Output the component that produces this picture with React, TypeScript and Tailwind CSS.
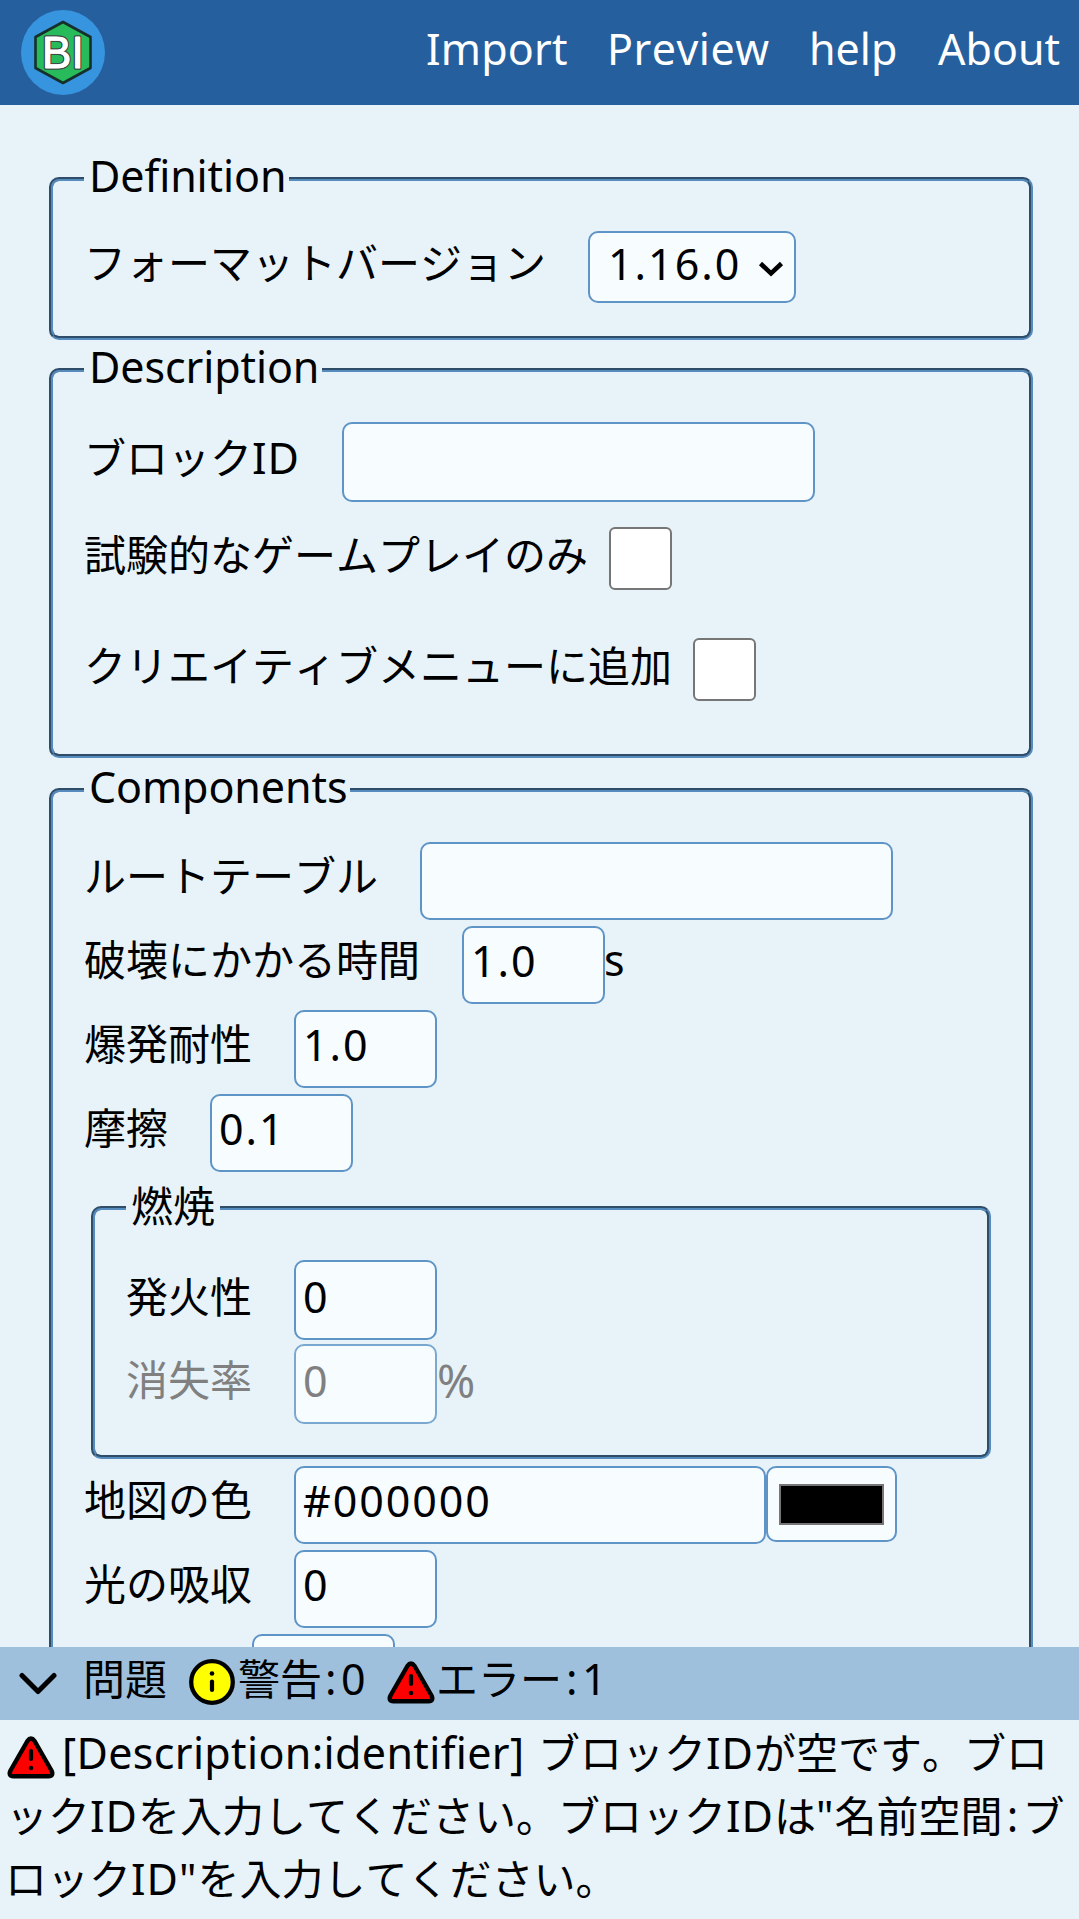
import type { ReactNode } from "react";

const inputBox =
  "shrink-0 rounded-[10px] border-2 border-[#5f94c6] bg-[#f7fcff] pl-[7px] pb-[10px] text-[43px] tracking-[1.900px] text-black outline-none";

function Latin({ children }: { children: ReactNode }) {
  return <span className="text-[43px] tracking-[1px]">{children}</span>;
}

function Legend({ children }: { children: ReactNode }) {
  return (
    <legend className="pt-[1px] pr-[3px] pb-[8px] pl-[5px] text-[43px] leading-[51px] tracking-[-0.100px]">
      {children}
    </legend>
  );
}

function Label({ children }: { children: ReactNode }) {
  return <label className="mr-[42px] leading-[67px] whitespace-nowrap">{children}</label>;
}

function NumberRow({ label, value, unit }: { label: string; value: string; unit?: string }) {
  return (
    <div className="flex h-[84px] items-start">
      <Label>{label}</Label>
      <input className={`${inputBox} h-[78px] w-[143px]`} defaultValue={value} />
      {unit && <span className="-ml-[1px] text-[43px] leading-[67px]">{unit}</span>}
    </div>
  );
}

function Checkbox() {
  return (
    <span className="ml-[21px] size-[63px] shrink-0 rounded-[6px] border-2 border-[#767676] bg-white" />
  );
}

function CheckRow({ label }: { label: string }) {
  return (
    <div className="flex h-[111px] items-start">
      <label className="leading-[56px] whitespace-nowrap">{label}</label>
      <Checkbox />
    </div>
  );
}

function Logo() {
  return (
    <svg className="h-[85px] w-[84px]" viewBox="0 0 84 85">
      <ellipse cx="42" cy="42.5" rx="42" ry="42.5" fill="#3794de" />
      <path
        d="M42 12 L69.5 27 V58 L42 73 L14.500 58 V27 Z"
        fill="#28bb5b"
        stroke="#16302c"
        strokeWidth="2.600"
        strokeLinejoin="round"
      />
      <g
        className="[font-family:'Liberation_Sans',sans-serif] text-[44px]"
        fill="#fff"
        stroke="#3c4a48"
        strokeWidth="3.400"
        strokeLinejoin="round"
        paintOrder="stroke"
      >
        <text x="21" y="58">B</text>
        <text x="50.500" y="58">I</text>
      </g>
      <g
        className="[font-family:'Liberation_Sans',sans-serif] text-[44px]"
        fill="#fff"
        stroke="#fff"
        strokeWidth="0.900"
        strokeLinejoin="round"
      >
        <text x="21" y="58">B</text>
        <text x="50.500" y="58">I</text>
      </g>
    </svg>
  );
}

function ErrorIcon() {
  return (
    <svg className="h-[43px] w-[48px] shrink-0" viewBox="0 0 48 43">
      <path
        d="M20.400 5 Q24 0 27.600 5 L44.500 34.500 Q47 40 41.500 40.300 H6.500 Q1 40 3.500 34.500 Z"
        fill="#f00"
        stroke="#000"
        strokeWidth="4.400"
        strokeLinejoin="round"
      />
      <path d="M24 15 V23" stroke="#000" strokeWidth="4.200" strokeLinecap="round" />
      <circle cx="24" cy="32" r="2.300" />
    </svg>
  );
}

function InfoIcon() {
  return (
    <svg className="h-[46px] w-[46px] shrink-0" viewBox="0 0 46 46">
      <circle cx="23" cy="23" r="20.800" fill="#ff0" stroke="#000" strokeWidth="4.300" />
      <path d="M23 22.500 V31" stroke="#000" strokeWidth="4.200" strokeLinecap="round" />
      <circle cx="23" cy="14.500" r="2.300" />
    </svg>
  );
}

const fieldset =
  "min-w-0 rounded-[10px] border-4 border-[#568bbd] [border-style:groove] px-[31px]";

export default function App() {
  return (
    <div
      lang="ja"
      className="flex h-[1919px] w-[1079px] flex-col overflow-hidden bg-[#e7f3f9] text-[42px] text-black [font-kerning:none] [font-family:'Noto_Sans','Noto_Sans_CJK_JP',sans-serif]"
    >
      <header className="flex h-[105px] shrink-0 items-center justify-between bg-[#265f9e] pr-5 pl-[21px]">
        <Logo />
        <nav className="flex gap-[42px] pb-[7px] text-[43px] leading-[60px] whitespace-nowrap text-white">
          <a className="w-[139px] tracking-[0.200px]">Import</a>
          <a className="w-[160px] tracking-[0.500px]">Preview</a>
          <a className="w-[87px]">help</a>
          <a className="w-[121px]">About</a>
        </nav>
      </header>

      <main className="min-h-0 flex-1 overflow-hidden pt-11 pr-[46px] pl-[49px]">
        <fieldset className={`${fieldset} h-[191px]`}>
          <Legend>Definition</Legend>
          <div className="flex items-start pt-[22px]">
            <label className="mr-[42px] w-[462px] leading-[63px] whitespace-nowrap">
              フォーマットバージョン
            </label>
            <div className="flex h-[72px] w-[208px] shrink-0 items-start justify-between rounded-[10px] border-2 border-[#5f94c6] bg-[#f7fcff] pr-[10px] pl-[18px]">
              <span className="text-[43px] leading-[61px] tracking-[2px]">1.16.0</span>
              <svg className="mt-[27px] h-[18px] w-[26px]" viewBox="0 0 26 18">
                <path d="M2.500 3.500 L13 13.500 L23.500 3.500" fill="none" stroke="#000" strokeWidth="4.500" />
              </svg>
            </div>
          </div>
        </fieldset>

        <fieldset className={`${fieldset} h-[418px]`}>
          <Legend>Description</Legend>
          <div className="flex h-[127px] items-start pt-[22px]">
            <label className="mr-[42px] w-[216px] leading-[72px] whitespace-nowrap">
              ブロック<Latin>ID</Latin>
            </label>
            <input className={`${inputBox} h-[80px] w-[473px]`} />
          </div>
          <CheckRow label="試験的なゲームプレイのみ" />
          <CheckRow label="クリエイティブメニューに追加" />
        </fieldset>

        <fieldset className={`${fieldset} mt-[2px] h-[1100px]`}>
          <Legend>Components</Legend>
          <div className="flex h-[106px] items-start pt-[22px]">
            <Label>ルートテーブル</Label>
            <input className={`${inputBox} h-[78px] w-[473px]`} />
          </div>
          <NumberRow label="破壊にかかる時間" value="1.0" unit="s" />
          <NumberRow label="爆発耐性" value="1.0" />
          <NumberRow label="摩擦" value="0.1" />

          <fieldset className={`${fieldset} mx-[7px] h-[281px]`}>
            <legend className="px-[5px] pt-[2px] pb-[6px] leading-[52px]">燃焼</legend>
            <div className="flex h-[106px] items-start pt-[22px]">
              <label className="mr-[42px] leading-[73px] whitespace-nowrap">発火性</label>
              <input
                className="h-[80px] w-[143px] shrink-0 rounded-[10px] border-2 border-[#5f94c6] bg-[#f7fcff] pb-[7px] pl-[7px] text-[43px]"
                defaultValue="0"
              />
            </div>
            <div className="flex h-[84px] items-start text-[#808080]">
              <label className="mr-[42px] leading-[72px] whitespace-nowrap">消失率</label>
              <input
                className="h-[80px] w-[143px] shrink-0 rounded-[10px] border-2 border-[#7ba8d1] bg-[#f7fcff] pb-[7px] pl-[7px] text-[43px] text-[#808080]"
                defaultValue="0"
              />
              <span className="text-[46px] leading-[72px]">%</span>
            </div>
          </fieldset>

          <div className="mt-[7px] flex h-[84px] items-start">
            <Label>地図の色</Label>
            <input className={`${inputBox} h-[78px] w-[472px]`} defaultValue="#000000" />
            <span className="flex h-[76px] w-[131px] shrink-0 items-center justify-center rounded-[10px] border-2 border-[#5f94c6] bg-[#f7fcff]">
              <span className="h-[41px] w-[105px] border-2 border-[#767676] bg-black" />
            </span>
          </div>
          <NumberRow label="光の吸収" value="0" />
          <div className="flex h-[84px] items-start pl-[168px]">
            <input className={`${inputBox} h-[78px] w-[143px]`} />
          </div>
        </fieldset>
      </main>

      <footer className="h-[272px] shrink-0">
        <div className="flex h-[73px] items-start bg-[#9ec0dd] leading-[63px] whitespace-nowrap">
          <svg className="mt-[25px] ml-[19px] h-[24px] w-[38px] shrink-0" viewBox="0 0 38 24">
            <path
              d="M3 3.500 L19 19.500 L35 3.500"
              fill="none"
              stroke="#000"
              strokeWidth="5"
              strokeLinecap="round"
              strokeLinejoin="round"
            />
          </svg>
          <span className="ml-[26px] w-[84px]">問題</span>
          <div className="mt-[12px] ml-[22px]">
            <InfoIcon />
          </div>
          <span className="ml-[3px] w-[84px]">警告</span>
          <span className="w-[65px] pl-[3px] text-[43px] tracking-[4.500px]">:0</span>
          <div className="mt-[14px]">
            <ErrorIcon />
          </div>
          <span className="ml-[1px] w-[127px]">エラー</span>
          <span className="pl-[3px] text-[43px] tracking-[4.500px]">:1</span>
        </div>

        <div className="pt-[1px] leading-[63px] whitespace-nowrap">
          <p className="flex h-[63px]">
            <span className="mt-[15px] ml-[7px] w-[48px] shrink-0">
              <ErrorIcon />
            </span>
            <span className="ml-[7px] w-[476px] shrink-0 text-[43px] tracking-[0.350px]">
              [Description:identifier]
            </span>
            <span>
              ブロック<Latin>ID</Latin>が空です。ブロ
            </span>
          </p>
          <p className="h-[63px] pl-[6px]">
            ック<Latin>ID</Latin>を入力してください。ブロック<Latin>ID</Latin>は<Latin>"</Latin>名前空間
            <span className="inline-block w-[20px] text-center text-[43px] leading-[50px]">:</span>ブ
          </p>
          <p className="h-[63px] pl-[5px]">
            ロック<Latin>ID"</Latin>を入力してください。
          </p>
        </div>
      </footer>
    </div>
  );
}
